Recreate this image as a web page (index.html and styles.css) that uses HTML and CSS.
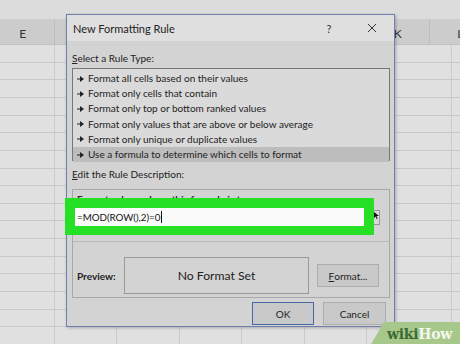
FILE: index.html
```html
<!DOCTYPE html>
<html>
<head>
<meta charset="utf-8">
<link rel="stylesheet" href="styles.css">
</head>
<body>
<div class="sheet">
  <div class="topband"></div>
  <div class="colhead">
    <div class="hcell">E</div>
    <div class="hcell"></div>
    <div class="hcell"></div>
    <div class="hcell"></div>
    <div class="hcell"></div>
    <div class="hcell"></div>
    <div class="hcell">K</div>
    <div class="hcell">L</div>
  </div>
  <div class="grid"></div>
</div>

<div class="dialog">
  <div class="titlebar">
    <span class="title">New Formatting Rule</span>
    <span class="help">?</span>
    <span class="close">
      <svg width="10" height="10" viewBox="0 0 10 10"><path d="M1 1 L9 9 M9 1 L1 9" stroke="#333" stroke-width="1" fill="none"/></svg>
    </span>
  </div>
  <div class="body">
    <div class="label"><u>S</u>elect a Rule Type:</div>
    <ul class="rules">
      <li><svg class="arr" width="7" height="6" viewBox="0 0 7 6"><path d="M0 2.5 H3 V0 L7 3 L3 6 V3.5 H0 Z" fill="#222"/></svg>Format all cells based on their values</li>
      <li><svg class="arr" width="7" height="6" viewBox="0 0 7 6"><path d="M0 2.5 H3 V0 L7 3 L3 6 V3.5 H0 Z" fill="#222"/></svg>Format only cells that contain</li>
      <li><svg class="arr" width="7" height="6" viewBox="0 0 7 6"><path d="M0 2.5 H3 V0 L7 3 L3 6 V3.5 H0 Z" fill="#222"/></svg>Format only top or bottom ranked values</li>
      <li><svg class="arr" width="7" height="6" viewBox="0 0 7 6"><path d="M0 2.5 H3 V0 L7 3 L3 6 V3.5 H0 Z" fill="#222"/></svg>Format only values that are above or below average</li>
      <li><svg class="arr" width="7" height="6" viewBox="0 0 7 6"><path d="M0 2.5 H3 V0 L7 3 L3 6 V3.5 H0 Z" fill="#222"/></svg>Format only unique or duplicate values</li>
      <li class="sel"><svg class="arr" width="7" height="6" viewBox="0 0 7 6"><path d="M0 2.5 H3 V0 L7 3 L3 6 V3.5 H0 Z" fill="#222"/></svg>Use a formula to determine which cells to format</li>
    </ul>
    <div class="label label2"><u>E</u>dit the Rule Description:</div>
    <div class="desc">
      <div class="fmtlabel">Format values where this formula is true:</div>
      <div class="formularow">
        <div class="green">
          <div class="input">=MOD(ROW(),2)=0<span class="caret"></span></div>
        </div>
        <div class="pick"><svg width="5" height="7" viewBox="0 0 5 7"><path d="M0 0 L5 4 L2.6 4 L3.6 7 L2.6 7 L1.8 4.6 L0 6 Z" fill="#111"/></svg></div>
      </div>
      <div class="sep"></div>
      <div class="preview">
        <span class="plabel">Preview:</span>
        <div class="pbox">No Format Set</div>
        <div class="btn fmtbtn"><u>F</u>ormat...</div>
      </div>
    </div>
    <div class="actions">
      <div class="btn ok">OK</div>
      <div class="btn cancel">Cancel</div>
    </div>
  </div>
</div>

<div class="wikihow"><span class="wiki">wiki</span><span class="how">How</span></div>
</body>
</html>
```

FILE: styles.css
```css
* { box-sizing: border-box; }
html, body { margin: 0; padding: 0; }
body {
  width: 460px;
  height: 344px;
  overflow: hidden;
  position: relative;
  background: #dedede;
  font-family: "Lato", "Noto Sans", sans-serif;
  color: #222;
}
.sheet { width: 460px; height: 344px; display: flex; flex-direction: column; }
.topband { height: 19px; background: #dcdcdc; }
.colhead {
  height: 26px;
  display: flex;
  background: #cccccc;
  border-bottom: 1px solid #c2c2c2;
  margin-left: -8px;
}
.hcell {
  flex: 0 0 62.5px;
  border-right: 1px solid #bdbdbd;
  display: flex;
  align-items: center;
  justify-content: center;
  font-size: 12px;
  color: #333;
  padding-top: 4px;
}
.grid {
  flex: 1;
  background-color: #e0e0e0;
  background-image:
    repeating-linear-gradient(to bottom, transparent 0 16.65px, #c9c9c9 16.65px 17.65px),
    repeating-linear-gradient(to right, transparent 0 61.5px, #cbcbcb 61.5px 62.5px);
  background-position: 0 0, -70px 0;
}

.dialog {
  position: absolute;
  left: 66px;
  top: 14px;
  width: 329px;
  height: 313px;
  background: #d3d3d3;
  border: 1px solid #6f7fae;
  box-shadow: 1px 1px 3px rgba(0,0,0,0.25);
  display: flex;
  flex-direction: column;
}
.titlebar {
  height: 26px;
  background: #dfdfdf;
  display: flex;
  align-items: center;
  padding-left: 6px;
  font-size: 11px;
  color: #222;
}
.title { flex: 1; }
.help { width: 20px; font-size: 11px; color: #333; margin-right: 28px; text-align: center; }
.close { width: 12px; margin-right: 15px; display: flex; }

.body { padding: 0 4px 0 5px; display: flex; flex-direction: column; }
.label { font-size: 10px; height: 27px; padding-top: 10px; line-height: 14px; }
.label u, .btn u { text-decoration: underline; text-underline-offset: 1px; }
.label2 { height: 17px; margin-top: 6px; padding-top: 0; }
.rules {
  list-style: none;
  margin: 0;
  padding: 2px 0 0 0;
  height: 93px;
  border: 1px solid #777;
  background: #dadada;
  font-size: 10px;
}
.rules li { height: 15.2px; line-height: 15.2px; padding-left: 4px; white-space: nowrap; display: flex; align-items: center; }
.rules li.sel { background: #bdbdbd; }
.arr { margin-right: 4px; flex: 0 0 auto; }

.desc {
  margin-top: 5px;
  height: 109px;
  border: 1px solid #a8a8a8;
  display: flex;
  flex-direction: column;
}
.fmtlabel { font-size: 10px; font-weight: 700; padding-left: 4px; height: 8px; line-height: 12px; padding-top: 3px; white-space: nowrap; }
.formularow { display: flex; align-items: flex-start; margin-left: -8px; }
.green {
  width: 309px;
  height: 37px;
  background: #25e025;
  padding: 10px 10px 9px 10px;
  position: relative;
  z-index: 1;
}
.input {
  height: 18px;
  background: #fbfbfb;
  font-size: 9.75px;
  line-height: 18px;
  padding-left: 2px;
  color: #111;
  display: flex;
  align-items: center;
}
.caret { display: inline-block; width: 1px; height: 12px; background: #111; margin-left: 1px; }
.pick {
  width: 7px;
  height: 15px;
  margin-top: 12px;
  margin-left: -1px;
  border: 1px solid #999;
  background: #d8d8d8;
  display: flex;
  align-items: flex-start;
  justify-content: center;
  padding-top: 1px;
}
.sep { height: 1px; background: #b8b8b8; margin-top: 6px; }
.preview { display: flex; align-items: center; padding-left: 4px; margin-top: 15px; }
.plabel { font-size: 10px; font-weight: 700; width: 47px; }
.pbox {
  width: 185px;
  height: 37px;
  border: 1px solid #9a9a9a;
  display: flex;
  align-items: center;
  justify-content: center;
  font-size: 12.2px;
  color: #222;
}
.btn {
  width: 62px;
  height: 23px;
  border: 1px solid #adadad;
  background: #c9c9c9;
  font-size: 10px;
  display: flex;
  align-items: center;
  justify-content: center;
  color: #222;
}
.fmtbtn { margin-left: 8px; }
.actions { display: flex; justify-content: flex-end; gap: 9px; margin-top: 4px; padding-right: 4px; }
.btn.ok { border-color: #4b66a8; }
.btn.cancel { width: 63px; }

.wikihow {
  position: absolute;
  left: 370px;
  top: 322px;
  width: 95px;
  height: 24px;
  background: #a7c78b;
  clip-path: polygon(14px 0, 100% 0, 100% 100%, 0 100%);
  font-family: "DejaVu Serif", "Liberation Serif", serif;
  font-weight: 700;
  font-size: 14px;
  line-height: 24px;
  padding-left: 17px;
  letter-spacing: -0.3px;
}
.wiki { color: #3d6a32; }
.how { color: #f3f7ee; }
```
